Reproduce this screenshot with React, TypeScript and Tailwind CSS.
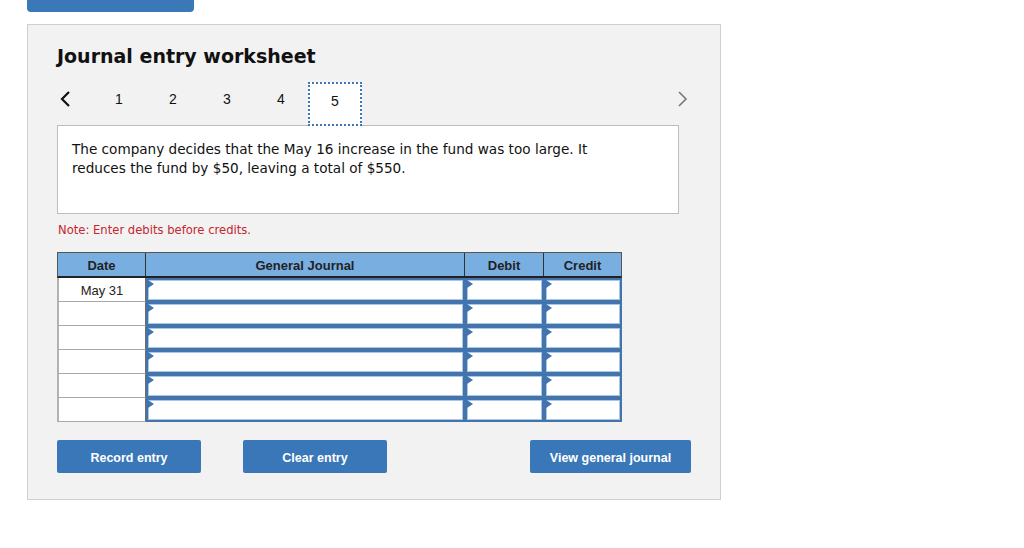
import React from 'react';

const rows = ['May 31', '', '', '', '', ''];

function InputCell({ w }: { w: string }) {
  return (
    <div className={`relative h-[24px] ${w} border-2 border-[#4474ac] bg-white shadow-[inset_0_0_0_1px_#a8c6e8]`}>
      <span className="absolute left-0 top-0 w-0 h-0 border-y-[4px] border-y-transparent border-l-[6px] border-l-[#3f74b3]" />
    </div>
  );
}

export default function App() {
  const pages = [1, 2, 3, 4, 5];

  return (
    <div className="w-[1024px] h-[548px] bg-white overflow-hidden">
      <div className="ml-[27px] w-[167px] h-3 bg-[#3a78b8] rounded-b" />

      <div className="ml-[27px] mt-3 w-[694px] h-[476px] border border-[#cfcfcf] bg-[#f2f2f2] px-[29px] pt-[19px] font-['DejaVu_Sans',sans-serif] text-[#111]">
        <h2 className="text-[19px] leading-[24px] font-bold">Journal entry worksheet</h2>

        <div className="mt-[14px] h-[43px] flex items-start">
          <button className="w-[35px] h-[33px] flex items-center pl-[3px]">
            <svg width="11" height="16" viewBox="0 0 11 16" fill="none" stroke="#111" strokeWidth="2.2">
              <path d="M9 1 L2 8 L9 15" />
            </svg>
          </button>
          {pages.map((p) => (
            <div
              key={p}
              className={`w-[54px] h-[44px] flex items-start justify-center pt-[9px] text-[14px] leading-[16px] font-['Liberation_Sans',sans-serif] ${
                p === 5 ? 'relative z-10 bg-white border-2 border-dotted border-[#3a78b8]' : ''
              }`}
            >
              {p}
            </div>
          ))}
          <div className="ml-auto h-[33px] flex items-center pr-[3px]">
            <svg width="11" height="16" viewBox="0 0 11 16" fill="none" stroke="#777" strokeWidth="1.6">
              <path d="M2 1 L9 8 L2 15" />
            </svg>
          </div>
        </div>

        <div className="w-[622px] h-[89px] bg-white border border-[#bdbdbd] px-[14px] pt-[14px] text-[13.6px] leading-[19px] text-[#111]">
          <p className="max-w-[560px]">
            The company decides that the May 16 increase in the fund was too large. It reduces the fund by $50, leaving a total of $550.
          </p>
        </div>

        <p className="mt-[8px] ml-px text-[11.6px] leading-[16px] text-[#c4262e]">Note: Enter debits before credits.</p>

        <div className="mt-[14px] w-[565px] font-['Liberation_Sans',sans-serif] text-[13px] text-[#222]">
          <div className="flex h-[26px] bg-[#79aee1] border border-[#555] border-b-2 border-b-[#222] font-bold">
            <div className="w-[88px] flex items-center justify-center pt-[2px] border-r border-[#333]">Date</div>
            <div className="w-[319px] flex items-center justify-center pt-[2px] border-r border-[#333]">General Journal</div>
            <div className="w-[79px] flex items-center justify-center pt-[2px] border-r border-[#333]">Debit</div>
            <div className="flex-1 flex items-center justify-center pt-[2px]">Credit</div>
          </div>
          {rows.map((d, i) => (
            <div key={i} className="flex h-[24px]">
              <div className="w-[89px] h-[24px] bg-white border-l-2 border-l-[#b3b3b3] border-b border-b-[#a9a9a9] border-r border-r-[#6d6d6d] flex items-center justify-center pt-[2px]">
                {d}
              </div>
              <InputCell w="w-[319px]" />
              <InputCell w="w-[79px]" />
              <InputCell w="w-[78px]" />
            </div>
          ))}
        </div>

        <div className="mt-[18px] flex items-center font-['Liberation_Sans',sans-serif] text-[12.5px] font-bold text-white">
          <button className="w-[144px] h-[33px] pt-[3px] bg-[#3a77b8] rounded-[2px]">Record entry</button>
          <button className="ml-[42px] w-[144px] h-[33px] pt-[3px] bg-[#3a77b8] rounded-[2px]">Clear entry</button>
          <button className="ml-auto w-[161px] h-[33px] pt-[3px] bg-[#3a77b8] rounded-[2px]">View general journal</button>
        </div>
      </div>
    </div>
  );
}
